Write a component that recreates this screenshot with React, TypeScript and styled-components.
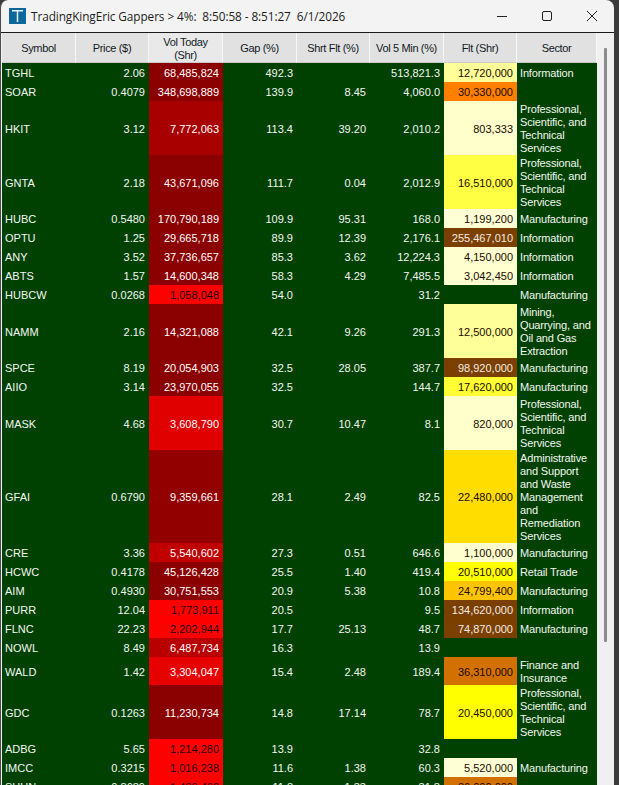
import styled, { createGlobalStyle } from 'styled-components'

const GlobalStyle = createGlobalStyle`
  html, body {
    margin: 0;
    height: 100%;
    background: #3b3b3b;
    overflow: hidden;
  }
`

const Window = styled.div`
  width: 613px;
  height: 785px;
  border-left: 1px solid #4a4a4a;
  border-top-right-radius: 8px;
  border-top-left-radius: 8px;
  background: #f3f3f3;
  overflow: hidden;
  display: flex;
  flex-direction: column;
`
const TitleBar = styled.div`
  height: 32px;
  flex: none;
  display: flex;
  align-items: center;
  border-bottom: 1px solid #1a1a1a;
  padding-left: 8px;
`
const TitleText = styled.div`
  margin-left: 5px;
  font-family: 'Open Sans', 'Noto Sans', sans-serif;
  font-size: 11.8px;
  letter-spacing: -0.08px;
  color: #1c1c1c;
  white-space: pre;
`
const Controls = styled.div`
  margin-left: auto;
  display: flex;
  align-items: center;
  gap: 33px;
  padding-right: 16px;
`
const Body = styled.div`
  flex: 1;
  min-height: 0;
  display: flex;
  padding-left: 1px;
`
const Table = styled.div`
  width: 595px;
  flex: none;
  display: flex;
  flex-direction: column;
  font-family: 'Liberation Sans', Arial, sans-serif;
  font-size: 11px;
  line-height: 13px;
`
const HeaderRow = styled.div`
  display: grid;
  grid-template-columns: 74px 73px 74px 74px 73px 74px 73px 80px;
  height: 30px;
  flex: none;
`
const HeaderCell = styled.div<{ $active?: boolean }>`
  display: flex;
  flex-direction: column;
  align-items: center;
  justify-content: center;
  box-sizing: border-box;
  padding-top: 2px;
  background: ${({ $active }) => ($active ? '#e9e9e9' : '#e1e1e1')};
  border-right: 1px solid #f7f7f7;
  border-bottom: 1px solid #c9c9c9;
  color: #111a26;
  font-size: 11px;
  letter-spacing: -0.35px;
`
const Row = styled.div`
  display: grid;
  flex: none;
  grid-template-columns: 74px 73px 74px 74px 73px 74px 73px 80px;
  min-height: 19px;
  background: #004000;
`
const Cell = styled.div<{ $bg?: string; $ink?: string; $left?: boolean }>`
  display: flex;
  align-items: center;
  justify-content: ${({ $left }) => ($left ? 'flex-start' : 'flex-end')};
  padding: ${({ $left }) => ($left ? '2px 0 0 3px' : '2px 4px 0 0')};
  background: ${({ $bg }) => $bg ?? 'transparent'};
  color: ${({ $ink }) => $ink ?? '#f4f8f2'};
  white-space: nowrap;
`
const SectorLine = styled.div`
  white-space: nowrap;
  letter-spacing: -0.15px;
`
const ScrollBar = styled.div`
  width: 17px;
  flex: none;
  background: #f0f0f0;
  padding-top: 15px;
`
const ScrollThumb = styled.div`
  width: 3px;
  height: 594px;
  margin-left: 7px;
  background: #8b8b8b;
  border-radius: 1px;
`

const PROF = 'Professional,|Scientific, and|Technical|Services'
const MFG = 'Manufacturing'
const INFO = 'Information'
const BROWN = '#7b3f00'

type Quote = {
  symbol: string
  price: string
  vol: string
  volBg: string
  gap: string
  short: string
  vol5: string
  flt: string
  fltBg?: string
  sector: string
}

const rows: Quote[] = [
  { symbol: 'TGHL', price: '2.06', vol: '68,485,824', volBg: '#8b0000', gap: '492.3', short: '', vol5: '513,821.3', flt: '12,720,000', fltBg: '#ffff99', sector: INFO },
  { symbol: 'SOAR', price: '0.4079', vol: '348,698,889', volBg: '#8b0000', gap: '139.9', short: '8.45', vol5: '4,060.0', flt: '30,330,000', fltBg: '#ff8000', sector: '' },
  { symbol: 'HKIT', price: '3.12', vol: '7,772,063', volBg: '#a80000', gap: '113.4', short: '39.20', vol5: '2,010.2', flt: '803,333', fltBg: '#ffffcc', sector: PROF },
  { symbol: 'GNTA', price: '2.18', vol: '43,671,096', volBg: '#8b0000', gap: '111.7', short: '0.04', vol5: '2,012.9', flt: '16,510,000', fltBg: '#ffff44', sector: PROF },
  { symbol: 'HUBC', price: '0.5480', vol: '170,790,189', volBg: '#8b0000', gap: '109.9', short: '95.31', vol5: '168.0', flt: '1,199,200', fltBg: '#ffffd6', sector: MFG },
  { symbol: 'OPTU', price: '1.25', vol: '29,665,718', volBg: '#8b0000', gap: '89.9', short: '12.39', vol5: '2,176.1', flt: '255,467,010', fltBg: BROWN, sector: INFO },
  { symbol: 'ANY', price: '3.52', vol: '37,736,657', volBg: '#8b0000', gap: '85.3', short: '3.62', vol5: '12,224.3', flt: '4,150,000', fltBg: '#ffffd0', sector: INFO },
  { symbol: 'ABTS', price: '1.57', vol: '14,600,348', volBg: '#8b0000', gap: '58.3', short: '4.29', vol5: '7,485.5', flt: '3,042,450', fltBg: '#ffffd0', sector: INFO },
  { symbol: 'HUBCW', price: '0.0268', vol: '1,058,048', volBg: '#ff0000', gap: '54.0', short: '', vol5: '31.2', flt: '', sector: MFG },
  { symbol: 'NAMM', price: '2.16', vol: '14,321,088', volBg: '#8b0000', gap: '42.1', short: '9.26', vol5: '291.3', flt: '12,500,000', fltBg: '#ffff99', sector: 'Mining,|Quarrying, and|Oil and Gas|Extraction' },
  { symbol: 'SPCE', price: '8.19', vol: '20,054,903', volBg: '#8b0000', gap: '32.5', short: '28.05', vol5: '387.7', flt: '98,920,000', fltBg: BROWN, sector: MFG },
  { symbol: 'AIIO', price: '3.14', vol: '23,970,055', volBg: '#8b0000', gap: '32.5', short: '', vol5: '144.7', flt: '17,620,000', fltBg: '#ffff33', sector: MFG },
  { symbol: 'MASK', price: '4.68', vol: '3,608,790', volBg: '#e00000', gap: '30.7', short: '10.47', vol5: '8.1', flt: '820,000', fltBg: '#ffffcc', sector: PROF },
  { symbol: 'GFAI', price: '0.6790', vol: '9,359,661', volBg: '#920000', gap: '28.1', short: '2.49', vol5: '82.5', flt: '22,480,000', fltBg: '#ffdd00', sector: 'Administrative|and Support|and Waste|Management|and|Remediation|Services' },
  { symbol: 'CRE', price: '3.36', vol: '5,540,602', volBg: '#c00000', gap: '27.3', short: '0.51', vol5: '646.6', flt: '1,100,000', fltBg: '#ffffd0', sector: MFG },
  { symbol: 'HCWC', price: '0.4178', vol: '45,126,428', volBg: '#8b0000', gap: '25.5', short: '1.40', vol5: '419.4', flt: '20,510,000', fltBg: '#ffff00', sector: 'Retail Trade' },
  { symbol: 'AIM', price: '0.4930', vol: '30,751,553', volBg: '#8b0000', gap: '20.9', short: '5.38', vol5: '10.8', flt: '24,799,400', fltBg: '#ffc400', sector: MFG },
  { symbol: 'PURR', price: '12.04', vol: '1,773,911', volBg: '#ff0000', gap: '20.5', short: '', vol5: '9.5', flt: '134,620,000', fltBg: BROWN, sector: INFO },
  { symbol: 'FLNC', price: '22.23', vol: '2,202,944', volBg: '#ff0000', gap: '17.7', short: '25.13', vol5: '48.7', flt: '74,870,000', fltBg: BROWN, sector: MFG },
  { symbol: 'NOWL', price: '8.49', vol: '6,487,734', volBg: '#b80000', gap: '16.3', short: '', vol5: '13.9', flt: '', sector: '' },
  { symbol: 'WALD', price: '1.42', vol: '3,304,047', volBg: '#e60000', gap: '15.4', short: '2.48', vol5: '189.4', flt: '36,310,000', fltBg: '#d27000', sector: 'Finance and|Insurance' },
  { symbol: 'GDC', price: '0.1263', vol: '11,230,734', volBg: '#8b0000', gap: '14.8', short: '17.14', vol5: '78.7', flt: '20,450,000', fltBg: '#ffff00', sector: PROF },
  { symbol: 'ADBG', price: '5.65', vol: '1,214,280', volBg: '#ff0000', gap: '13.9', short: '', vol5: '32.8', flt: '', sector: '' },
  { symbol: 'IMCC', price: '0.3215', vol: '1,016,238', volBg: '#ff0000', gap: '11.6', short: '1.38', vol5: '60.3', flt: '5,520,000', fltBg: '#ffffd6', sector: MFG },
  { symbol: 'SHUN', price: '0.8689', vol: '1,480,462', volBg: '#ff0000', gap: '11.8', short: '1.33', vol5: '31.8', flt: '36,000,000', fltBg: '#d27000', sector: '' },
]

const headers = ['Symbol', 'Price ($)', 'Vol Today|(Shr)', 'Gap (%)', 'Shrt Flt (%)', 'Vol 5 Min (%)', 'Flt (Shr)', 'Sector']

// black text only on the brightest red, white on the darker reds
const volInk = (bg: string) => (bg === '#ff0000' ? '#1a0000' : '#ffffff')
const fltInk = (bg?: string) => (bg === BROWN ? '#f4ece2' : '#1a0a00')

function AppIcon() {
  return (
    <svg width="17" height="16" viewBox="0 0 17 16">
      <rect width="17" height="16" fill="#0b679c" />
      <rect x="3" y="2" width="11" height="1.5" fill="#e8f2f8" />
      <rect x="7.75" y="2" width="1.5" height="12" fill="#e8f2f8" />
    </svg>
  )
}

function WindowControls() {
  return (
    <Controls>
      <svg width="12" height="12" viewBox="0 0 12 12">
        <path d="M1 6.5h10" stroke="#222" fill="none" />
      </svg>
      <svg width="12" height="12" viewBox="0 0 12 12">
        <rect x="1.5" y="1.5" width="9" height="9" rx="1.5" stroke="#222" fill="none" />
      </svg>
      <svg width="12" height="12" viewBox="0 0 12 12">
        <path d="M1 1l10 10M11 1L1 11" stroke="#222" fill="none" />
      </svg>
    </Controls>
  )
}

export default function App() {
  return (
    <>
      <GlobalStyle />
      <Window>
        <TitleBar>
          <AppIcon />
          <TitleText>{'TradingKingEric Gappers > 4%:  8:50:58 - 8:51:27  6/1/2026'}</TitleText>
          <WindowControls />
        </TitleBar>
        <Body>
          <Table>
            <HeaderRow>
              {headers.map((h) => (
                <HeaderCell key={h} $active={h.startsWith('Vol Today')}>
                  {h.split('|').map((line) => (
                    <div key={line}>{line}</div>
                  ))}
                </HeaderCell>
              ))}
            </HeaderRow>
            {rows.map((r) => (
              <Row key={r.symbol}>
                <Cell $left>{r.symbol}</Cell>
                <Cell>{r.price}</Cell>
                <Cell $bg={r.volBg} $ink={volInk(r.volBg)}>
                  {r.vol}
                </Cell>
                <Cell>{r.gap}</Cell>
                <Cell>{r.short}</Cell>
                <Cell>{r.vol5}</Cell>
                <Cell $bg={r.fltBg} $ink={fltInk(r.fltBg)}>
                  {r.flt}
                </Cell>
                <Cell $left>
                  <div>
                    {r.sector.split('|').map((line, i) => (
                      <SectorLine key={i}>{line}</SectorLine>
                    ))}
                  </div>
                </Cell>
              </Row>
            ))}
          </Table>
          <ScrollBar>
            <ScrollThumb />
          </ScrollBar>
        </Body>
      </Window>
    </>
  )
}
